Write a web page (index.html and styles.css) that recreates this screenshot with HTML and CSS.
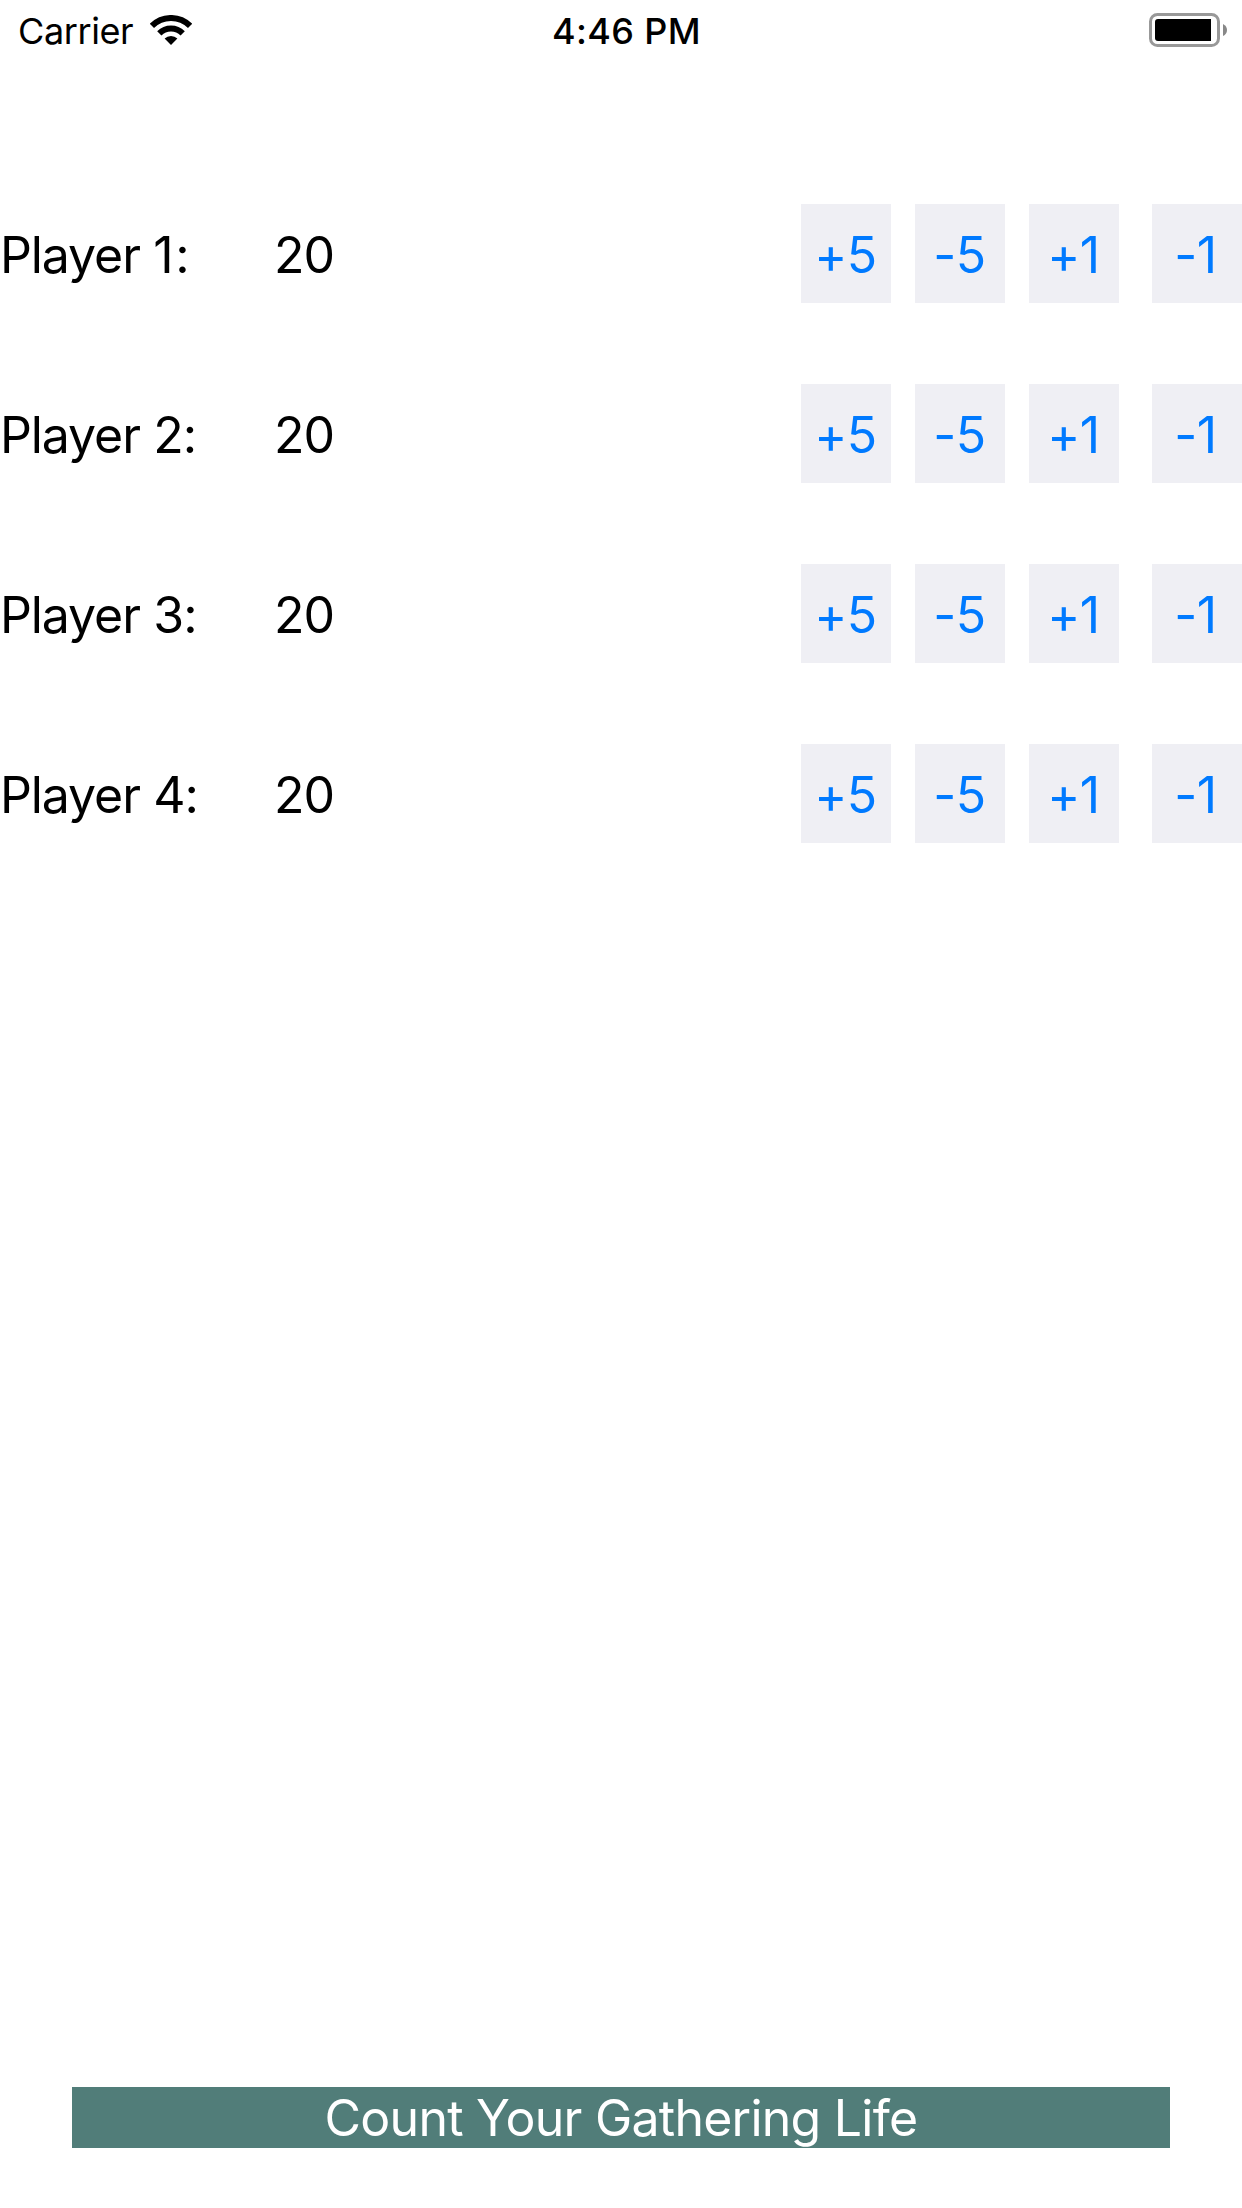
FILE: index.html
```html
<!DOCTYPE html>
<html lang="en">
<head>
<meta charset="utf-8">
<title>Life Counter</title>
<link rel="stylesheet" href="styles.css">
</head>
<body>
<header class="status">
  <div class="network"><span class="carrier">Carrier</span>
    <svg class="wifi" width="42" height="31" viewBox="0 0 42 31"><g fill="none" stroke="#000" stroke-width="6"><path d="M1.9 10.9A27 27 0 0 1 40.1 10.9"/><path d="M9.3 18.3A16.6 16.6 0 0 1 32.7 18.3"/></g><path d="M14.6 23.6A9 9 0 0 1 27.4 23.6L21 30Z"/></svg>
  </div>
  <span class="time">4:46 PM</span>
  <svg class="battery" width="79" height="34" viewBox="0 0 79 34"><rect x="1.5" y="1.5" width="68" height="31" rx="7" fill="none" stroke="#999" stroke-width="3"/><path d="M9 6H62V28H9Q6 28 6 25V9Q6 6 9 6Z"/><path d="M74 11Q78 13 78 17T74 23Z" fill="#888"/></svg>
</header>
<main class="players">
  <section class="player"><span class="name">Player <span class="one">1</span>:</span><span class="life">20</span><div class="controls"><button class="step">+5</button><button class="step">-5</button><button class="step">+1</button><button class="step last">-1</button></div></section>
  <section class="player"><span class="name">Player 2:</span><span class="life">20</span><div class="controls"><button class="step">+5</button><button class="step">-5</button><button class="step">+1</button><button class="step last">-1</button></div></section>
  <section class="player"><span class="name">Player 3:</span><span class="life">20</span><div class="controls"><button class="step">+5</button><button class="step">-5</button><button class="step">+1</button><button class="step last">-1</button></div></section>
  <section class="player"><span class="name">Player 4:</span><span class="life">20</span><div class="controls"><button class="step">+5</button><button class="step">-5</button><button class="step">+1</button><button class="step last">-1</button></div></section>
</main>
<footer class="banner">Count Your Gathering Life</footer>
</body>
</html>
```
FILE: styles.css
```css
* { box-sizing: border-box; }
body { margin: 0; width: 1242px; height: 2208px; display: flex; flex-direction: column; background: #fff; color: #000; font-family: Inter, sans-serif; font-size: 50px; }
.status { height: 60px; display: grid; grid-template-columns: 1fr auto 1fr; padding: 0 14px 0 18px; font-size: 36px; line-height: 63px; }
.network { display: flex; }
.carrier { width: 132px; white-space: nowrap; letter-spacing: -0.4px; }
.wifi { margin-top: 15px; }
.time { padding-left: 7px; font-weight: 550; letter-spacing: 0.4px; }
.battery { justify-self: end; margin-top: 13px; }
.players { margin-top: 144px; display: flex; flex-direction: column; gap: 81px; }
.player { height: 99px; display: flex; align-items: center; white-space: nowrap; }
.name, .life { padding-top: 2px; }
.name { width: 274px; letter-spacing: -1.1px; word-spacing: 0.5px; }
.one { letter-spacing: 1.5px; }
.life { letter-spacing: -0.9px; }
.controls { display: flex; gap: 24px; margin-left: auto; }
.step { width: 90px; height: 99px; padding: 2px 1px 0 0; border: 0; background: #efeff4; color: #007aff; font: inherit; letter-spacing: -0.5px; }
.last { margin-left: 9px; padding-right: 3px; }
.banner { margin: auto 72px 60px; height: 61px; background: #517d79; color: #fff; text-align: center; line-height: 63px; letter-spacing: -0.75px; }
```
